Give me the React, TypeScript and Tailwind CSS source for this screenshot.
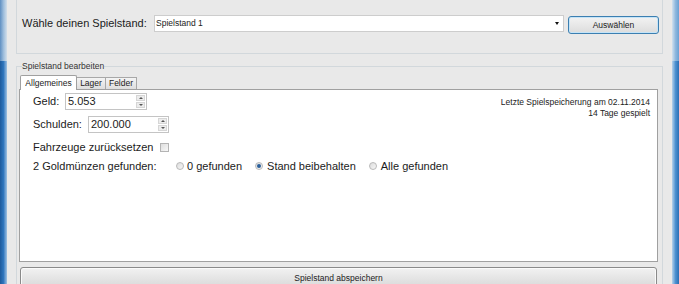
import React from 'react';

const Spinner = () => (
  <div className="w-[9px] flex flex-col gap-[1px] py-[1px] mr-[1px]">
    <div className="flex-1 bg-[#ececec] border border-[#d6d6d6] flex items-center justify-center">
      <div className="w-0 h-0 border-x-[2px] border-x-transparent border-b-[2px] border-b-[#555]" />
    </div>
    <div className="flex-1 bg-[#ececec] border border-[#d6d6d6] flex items-center justify-center">
      <div className="w-0 h-0 border-x-[2px] border-x-transparent border-t-[2px] border-t-[#555]" />
    </div>
  </div>
);

const NumBox = ({ value, width }: { value: string; width: string }) => (
  <div className={`${width} h-[17px] flex bg-white border border-[#c4c4c4]`}>
    <span className="flex-1 pl-[2px] text-[11px] leading-[15px]">{value}</span>
    <Spinner />
  </div>
);

const Radio = ({ checked }: { checked?: boolean }) => (
  <div className="w-[8px] h-[8px] rounded-full border border-[#b9b9b9] bg-linear-to-br from-[#dcdcdc] to-[#f7f7f7] flex items-center justify-center">
    {checked && <div className="w-[4px] h-[4px] rounded-full bg-[#2a5f9a]" />}
  </div>
);

export default function App() {
  return (
    <div className="w-[679px] h-[284px] overflow-hidden flex bg-[#e9e9e9] font-['Liberation_Sans',Arial,sans-serif] text-[#1b1b1b]">
      {/* linker Fensterrahmen */}
      <div className="w-[7px] flex flex-col shrink-0">
        <div className="h-[61px] bg-linear-to-r from-[#5f8fc2] via-[#9dbddc] to-[#d3dfea]" />
        <div className="flex-1 bg-linear-to-r from-[#1d5a9c] via-[#2f76bd] to-[#9ec2e2]" />
      </div>

      <div className="w-[665px] flex flex-col pl-[9px] pr-[9px]">
        {/* Spielstand auswählen */}
        <div className="h-[54px] shrink-0 border-x border-b border-[#d2d8dc] flex items-start pt-[15px] pl-[5px]">
          <span className="w-[132px] text-[11px] leading-[17px]">Wähle deinen Spielstand:</span>
          <div className="w-[410px] h-[17px] bg-white border border-[#cdcdcd] flex items-center justify-between pl-[1px] pr-[4px]">
            <span className="text-[8.5px] text-[#222]">Spielstand 1</span>
            <div className="w-0 h-0 border-x-[2.5px] border-x-transparent border-t-[3px] border-t-[#111]" />
          </div>
          <button className="ml-[4px] mt-[1px] w-[91px] h-[18px] rounded-[3px] border border-[#3c7fb1] bg-linear-to-b from-[#f3f3f3] to-[#dcdcdc] shadow-[inset_0_0_0_1px_#c5e4f7] text-[8.5px] text-[#222]">
            Auswählen
          </button>
        </div>

        {/* Spielstand bearbeiten */}
        <fieldset className="mt-[8px] flex-1 border border-[#d2d8dc] pl-[2px] pr-[4px]">
          <legend className="ml-[3px] text-[8.5px] leading-[9px] text-[#333]">Spielstand bearbeiten</legend>

          <div className="mt-[4px] h-[14px] flex items-end pl-[1px] text-[8.5px] text-[#222]">
            <div className="relative z-10 -mb-px w-[57px] h-[15px] bg-white border-x border-t border-[#a0a0a0] rounded-t-[2px] flex items-center justify-center">
              Allgemeines
            </div>
            <div className="w-[29px] h-[12px] border-t border-r border-[#a8a8a8] bg-linear-to-b from-[#f4f4f4] to-[#dedede] flex items-center justify-center">
              Lager
            </div>
            <div className="w-[31px] h-[12px] border-t border-r border-[#a8a8a8] bg-linear-to-b from-[#f4f4f4] to-[#dedede] flex items-center justify-center">
              Felder
            </div>
          </div>

          <div className="w-[639px] h-[173px] bg-white border border-[#a0a0a0] flex justify-between pl-[13px] pr-[7px]">
            <div className="flex flex-col pt-[3px] text-[11px]">
              <div className="h-[17px] flex items-center">
                <span className="w-[32px]">Geld:</span>
                <NumBox value="5.053" width="w-[82px]" />
              </div>
              <div className="mt-[6px] h-[17px] flex items-center">
                <span className="w-[55px]">Schulden:</span>
                <NumBox value="200.000" width="w-[81px]" />
              </div>
              <div className="mt-[6px] h-[17px] flex items-center">
                <span>Fahrzeuge zurücksetzen</span>
                <div className="ml-[7px] w-[9px] h-[9px] border border-[#b4b4b4] bg-linear-to-br from-[#dedede] to-[#f8f8f8]" />
              </div>
              <div className="mt-[2px] h-[16px] flex items-center">
                <span className="w-[143px]">2 Goldmünzen gefunden:</span>
                <Radio />
                <span className="ml-[3px]">0 gefunden</span>
                <div className="ml-[13px]"><Radio checked /></div>
                <span className="ml-[4px]">Stand beibehalten</span>
                <div className="ml-[13px]"><Radio /></div>
                <span className="ml-[4px]">Alle gefunden</span>
              </div>
            </div>
            <div className="pt-[7px] text-right text-[8.5px] leading-[11px] text-[#222]">
              <p>Letzte Spielspeicherung am 02.11.2014</p>
              <p>14 Tage gespielt</p>
            </div>
          </div>

          <button className="mt-[5px] ml-[1px] w-[637px] h-[22px] rounded-[3px] border border-[#8a8a8a] bg-linear-to-b from-[#f2f2f2] to-[#d8d8d8] shadow-[inset_0_0_0_1px_#fafafa] text-[8.5px] text-[#222] flex items-start justify-center pt-[4px]">
            Spielstand abspeichern
          </button>
        </fieldset>
      </div>

      {/* rechter Fensterrahmen */}
      <div className="w-[7px] flex flex-col shrink-0">
        <div className="h-[61px] bg-linear-to-r from-[#d3e2ef] via-[#8fb8de] to-[#6aa0d3]" />
        <div className="flex-1 bg-linear-to-r from-[#b6d2ea] via-[#4d91d0] to-[#2b6fb4]" />
      </div>
    </div>
  );
}
